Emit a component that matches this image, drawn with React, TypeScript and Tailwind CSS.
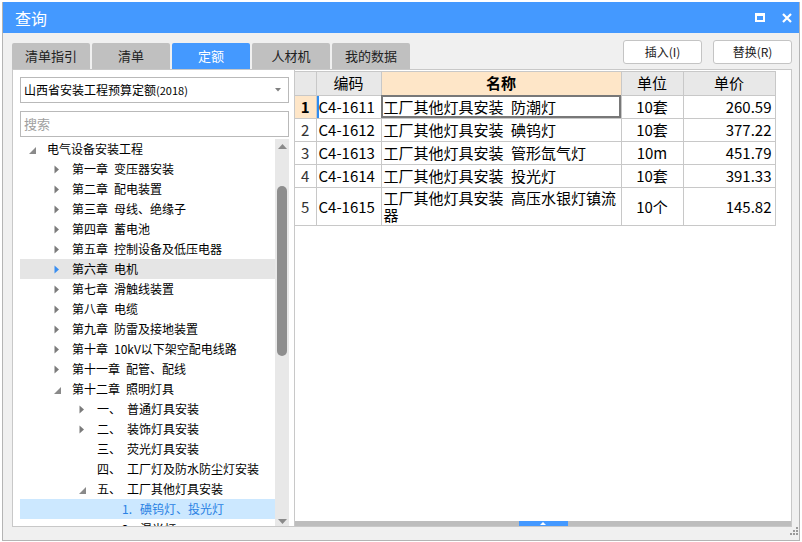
import React from "react";

type Node = {
  level: number;
  prefix: string;
  text: string;
  arrow?: "open" | "closed";
  hover?: boolean;
  selected?: boolean;
};

const tree: Node[] = [
  { level: 0, prefix: "", text: "电气设备安装工程", arrow: "open" },
  { level: 1, prefix: "第一章", text: "变压器安装", arrow: "closed" },
  { level: 1, prefix: "第二章", text: "配电装置", arrow: "closed" },
  { level: 1, prefix: "第三章", text: "母线、绝缘子", arrow: "closed" },
  { level: 1, prefix: "第四章", text: "蓄电池", arrow: "closed" },
  { level: 1, prefix: "第五章", text: "控制设备及低压电器", arrow: "closed" },
  { level: 1, prefix: "第六章", text: "电机", arrow: "closed", hover: true },
  { level: 1, prefix: "第七章", text: "滑触线装置", arrow: "closed" },
  { level: 1, prefix: "第八章", text: "电缆", arrow: "closed" },
  { level: 1, prefix: "第九章", text: "防雷及接地装置", arrow: "closed" },
  { level: 1, prefix: "第十章", text: "10kV以下架空配电线路", arrow: "closed" },
  { level: 1, prefix: "第十一章", text: "配管、配线", arrow: "closed" },
  { level: 1, prefix: "第十二章", text: "照明灯具", arrow: "open" },
  { level: 2, prefix: "一、", text: "普通灯具安装", arrow: "closed" },
  { level: 2, prefix: "二、", text: "装饰灯具安装", arrow: "closed" },
  { level: 2, prefix: "三、", text: "荧光灯具安装" },
  { level: 2, prefix: "四、", text: "工厂灯及防水防尘灯安装" },
  { level: 2, prefix: "五、", text: "工厂其他灯具安装", arrow: "open" },
  { level: 3, prefix: "1.", text: "碘钨灯、投光灯", selected: true },
  { level: 3, prefix: "2.", text: "混光灯" },
];

const indent = ["pl-[9px]", "pl-[34px]", "pl-[59px]", "pl-[84px]"];
const gapAfterPrefix = ["ml-0", "ml-[6px]", "ml-[6px]", "ml-[8px]"];

const rows = [
  { no: 1, code: "C4-1611", name: "工厂其他灯具安装\u2002防潮灯", unit: "10套", price: "260.59" },
  { no: 2, code: "C4-1612", name: "工厂其他灯具安装\u2002碘钨灯", unit: "10套", price: "377.22" },
  { no: 3, code: "C4-1613", name: "工厂其他灯具安装\u2002管形氙气灯", unit: "10m", price: "451.79" },
  { no: 4, code: "C4-1614", name: "工厂其他灯具安装\u2002投光灯", unit: "10套", price: "391.33" },
  { no: 5, code: "C4-1615", name: "工厂其他灯具安装\u2002高压水银灯镇流器", unit: "10个", price: "145.82" },
];

const tabs = ["清单指引", "清单", "定额", "人材机", "我的数据"];

function Arrow({ kind, blue }: { kind?: "open" | "closed"; blue?: boolean }) {
  if (!kind) return null;
  const fill = blue ? "#3a8ef0" : "#7b7b7b";
  if (kind === "closed")
    return (
      <svg width="6" height="9" viewBox="0 0 6 9">
        <path d="M0.5 0.5 L5 4.5 L0.5 8.5 Z" fill={fill} />
      </svg>
    );
  return (
    <svg width="7" height="7" viewBox="0 0 7 7" className="mt-[3px]">
      <path d="M7 0 L7 7 L0 7 Z" fill="#8a8a8a" />
    </svg>
  );
}

export default function App() {
  return (
    <div className="w-[802px] h-[542px] bg-white overflow-hidden font-['Noto_Sans_CJK_SC',sans-serif]">
      <div className="relative ml-[2px] mt-[2px] w-[798px] h-[539px] bg-[#f0f0f0] border border-t-0 border-[#b4b4b4] flex flex-col">
        {/* title bar */}
        <div className="shrink-0 h-[31px] bg-[#4499ff] flex items-center justify-between pl-[12px] pr-[7px] text-white">
          <span className="text-[16px] leading-none">查询</span>
          <div className="flex items-center gap-[17px]">
            <div className="w-[10px] h-[9px] border-2 border-t-[3px] border-white" />
            <svg width="10" height="10" viewBox="0 0 10 10">
              <path d="M1 1 L9 9 M9 1 L1 9" stroke="white" strokeWidth="2.2" />
            </svg>
          </div>
        </div>

        {/* tabs + buttons */}
        <div className="shrink-0 h-[36px] flex justify-between pl-[9px] pr-[7px]">
          <div className="flex items-end gap-[2px]">
            {tabs.map((t) => (
              <div
                key={t}
                className={
                  t === "定额"
                    ? "w-[78px] h-[26px] rounded-t-[2px] bg-[#4499ff] text-white text-[13px] flex items-center justify-center"
                    : "w-[78px] h-[26px] rounded-t-[2px] bg-[#c0c0c0] text-[#222] text-[13px] flex items-center justify-center"
                }
              >
                {t}
              </div>
            ))}
          </div>
          <div className="flex gap-[11px] pt-[7px]">
            <button className="w-[79px] h-[24px] bg-white border border-[#c4c4c4] rounded-[3px] text-[12px] text-[#222]">
              插入(I)
            </button>
            <button className="w-[79px] h-[24px] bg-white border border-[#c4c4c4] rounded-[3px] text-[12px] text-[#222]">
              替换(R)
            </button>
          </div>
        </div>

        {/* panels */}
        <div className="flex-1 min-h-0 flex pl-[9px] pr-[7px] pb-[13px]">
          {/* left panel */}
          <div className="w-[282px] shrink-0 bg-white border border-r-0 border-[#c8c8c8] flex flex-col min-h-0">
            <div className="shrink-0 pt-[7px] pl-[7px] pr-[5px]">
              <div className="h-[26px] border border-[#b9b9b9] flex items-center justify-between pl-[3px] pr-[7px]">
                <span className="text-[12px] text-black">
                  山西省安装工程预算定额<span className="text-[11px]">(2018)</span>
                </span>
                <svg width="6" height="4" viewBox="0 0 6 4">
                  <path d="M0 0 L6 0 L3 3.5 Z" fill="#808080" />
                </svg>
              </div>
              <div className="mt-[8px] h-[26px] border border-[#b9b9b9] flex items-center pl-[3px]">
                <span className="text-[13px] text-[#a0a0a0]">搜索</span>
              </div>
            </div>
            <div className="flex-1 min-h-0 flex pl-[7px] pr-[5px] pt-[2px] overflow-hidden">
              <div className="flex-1 overflow-hidden">
                {tree.map((n, i) => (
                  <div
                    key={i}
                    className={
                      "h-[20px] flex items-center " +
                      indent[n.level] +
                      (n.hover ? " bg-[#e5e5e5]" : "") +
                      (n.selected ? " bg-[#cce8ff]" : "")
                    }
                  >
                    <div className="w-[18px] flex items-center">
                      <Arrow kind={n.arrow} blue={n.hover} />
                    </div>
                    <span
                      className={
                        "text-[12px] leading-none whitespace-nowrap " +
                        (n.selected ? "text-[#2a82e4]" : "text-black")
                      }
                    >
                      {n.prefix}
                      <span className={gapAfterPrefix[n.level]}>{n.text}</span>
                    </span>
                  </div>
                ))}
              </div>
              {/* vertical scrollbar */}
              <div className="w-[14px] bg-[#e8e8e8] flex flex-col items-center">
                <svg width="9" height="5" viewBox="0 0 9 5" className="mt-[5px]">
                  <path d="M0 5 L4.5 0 L9 5 Z" fill="#8a8a8a" />
                </svg>
                <div className="mt-[37px] w-[10px] h-[170px] rounded-full bg-[#8e8e8e]" />
                <div className="flex-1" />
                <svg width="9" height="5" viewBox="0 0 9 5" className="mb-[2px]">
                  <path d="M0 0 L9 0 L4.5 5 Z" fill="#8a8a8a" />
                </svg>
              </div>
            </div>
          </div>

          {/* right panel */}
          <div className="flex-1 bg-white border border-[#c8c8c8] flex flex-col">
            <table className="mt-[1px] table-fixed border-collapse w-[480px] text-[15px] text-black">
              <colgroup>
                <col className="w-[21px]" />
                <col className="w-[65px]" />
                <col className="w-[240px]" />
                <col className="w-[62px]" />
                <col className="w-[92px]" />
              </colgroup>
              <thead>
                <tr className="h-[22px]">
                  <th className="bg-[#e8e8e8] border border-l-0 border-[#c8c8c8]" />
                  <th className="bg-[#e8e8e8] border border-[#c8c8c8] font-normal">编码</th>
                  <th className="bg-[#fee6c8] border border-[#c8c8c8] font-bold">名称</th>
                  <th className="bg-[#e8e8e8] border border-[#c8c8c8] font-normal">单位</th>
                  <th className="bg-[#e8e8e8] border border-[#c8c8c8] font-normal">单价</th>
                </tr>
              </thead>
              <tbody>
                {rows.map((r) => (
                  <tr key={r.no} className={r.no === 5 ? "h-[38px]" : "h-[23px]"}>
                    <td
                      className={
                        "border border-l-0 border-[#c8c8c8] text-center leading-none " +
                        (r.no === 1 ? "bg-[#fee6c8] font-bold" : "text-[#333]")
                      }
                    >
                      {r.no}
                    </td>
                    <td
                      className={
                        "border border-[#c8c8c8] pl-[2px] leading-none whitespace-nowrap " +
                        (r.no === 1 ? "shadow-[inset_2px_0_0_#2f8cf0]" : "")
                      }
                    >
                      {r.code}
                    </td>
                    <td
                      className={
                        "border border-[#c8c8c8] pl-[2px] pr-[2px] leading-[17px] " +
                        (r.no === 1 ? "outline-2 outline-[#787878] -outline-offset-2" : "")
                      }
                    >
                      {r.name}
                    </td>
                    <td className="border border-[#c8c8c8] text-center leading-none">{r.unit}</td>
                    <td className="border border-[#c8c8c8] text-right pr-[3px] leading-none">{r.price}</td>
                  </tr>
                ))}
              </tbody>
            </table>
            <div className="flex-1" />
            {/* horizontal scrollbar */}
            <div className="h-[5px] bg-[#bdbdbd] flex justify-center">
              <div className="w-[49px] h-[5px] bg-[#4499ff] flex items-center justify-center">
                <svg width="6" height="3" viewBox="0 0 6 3">
                  <path d="M0 3 L3 0 L6 3 Z" fill="white" />
                </svg>
              </div>
            </div>
          </div>
        </div>

        {/* resize grip */}
        <div className="absolute right-[1px] bottom-[5px] grid grid-cols-3 gap-[1px]">
          <span className="w-[2px] h-[2px]" />
          <span className="w-[2px] h-[2px]" />
          <span className="w-[2px] h-[2px] bg-[#9a9a9a]" />
          <span className="w-[2px] h-[2px]" />
          <span className="w-[2px] h-[2px] bg-[#9a9a9a]" />
          <span className="w-[2px] h-[2px] bg-[#9a9a9a]" />
          <span className="w-[2px] h-[2px] bg-[#9a9a9a]" />
          <span className="w-[2px] h-[2px] bg-[#9a9a9a]" />
          <span className="w-[2px] h-[2px] bg-[#9a9a9a]" />
        </div>
      </div>
    </div>
  );
}
